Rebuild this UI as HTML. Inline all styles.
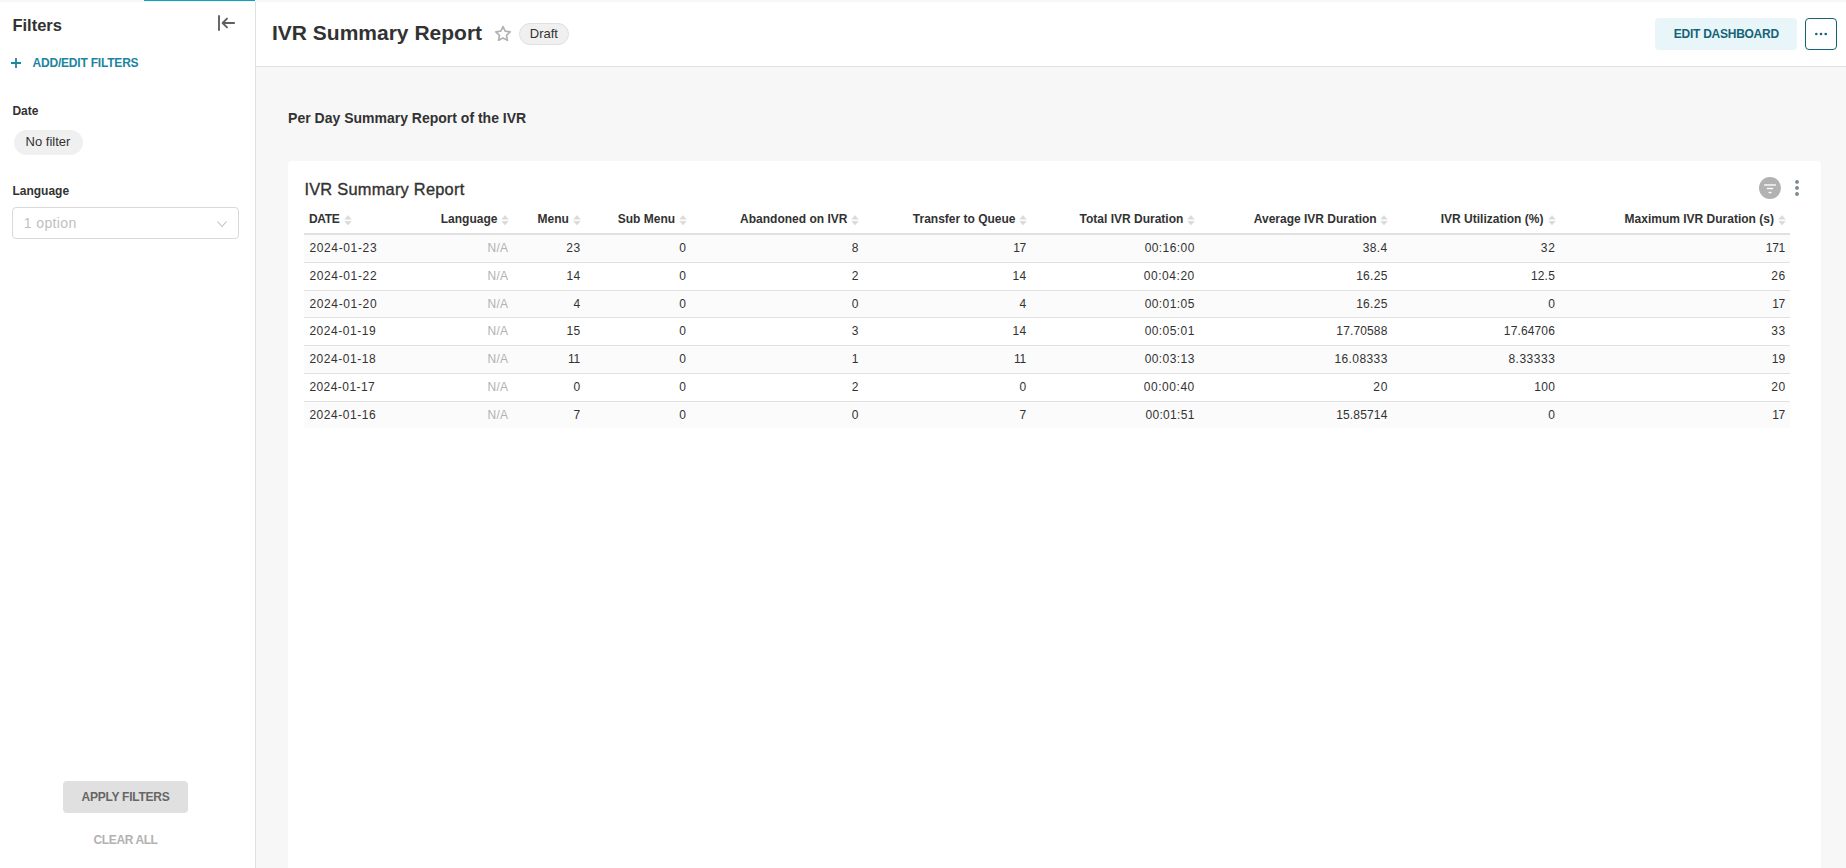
<!DOCTYPE html>
<html><head><meta charset="utf-8"><title>IVR Summary Report</title>
<style>
html,body{margin:0;padding:0;width:1846px;height:868px;overflow:hidden;background:#fff;font-family:"Liberation Sans", sans-serif}
.t{position:absolute;white-space:nowrap;line-height:normal;font-family:"Liberation Sans", sans-serif}
</style></head><body>
<div style="position:absolute;left:0;top:0;width:1846px;height:2px;background:#f7f7f7"></div><div style="position:absolute;left:144px;top:0;width:111px;height:1px;background:#0ea0c6"></div><div style="position:absolute;left:255px;top:2px;width:1px;height:866px;background:#e0e0e0"></div><div class="t" style="left:12.4px;top:16.07px;font-size:16.5px;font-weight:700;color:#323232;">Filters</div>
<svg style="position:absolute;left:214px;top:10px" width="26" height="26" viewBox="0 0 26 26"><path d="M5 5.2v15.6" stroke="#606060" stroke-width="1.9" fill="none"/><path d="M20.1 13H8.6M13 8.6L8.6 13l4.4 4.4" stroke="#606060" stroke-width="1.9" fill="none" stroke-linecap="round" stroke-linejoin="round"/></svg><svg style="position:absolute;left:10px;top:57px" width="12" height="12" viewBox="0 0 12 12"><path d="M6 1v10M1 6h10" stroke="#1a85a0" stroke-width="1.8"/></svg><div class="t" style="left:32.5px;top:56.14px;font-size:12px;font-weight:700;color:#1a85a0;letter-spacing:-0.2px;">ADD/EDIT FILTERS</div>
<div class="t" style="left:12.4px;top:104.24px;font-size:12px;font-weight:700;color:#323232;">Date</div>
<div style="position:absolute;left:14px;top:130px;width:69px;height:25px;border-radius:13px;background:#f0f0f0"></div><div class="t" style="left:25.6px;top:134.04px;font-size:13px;font-weight:400;color:#323232;">No filter</div>
<div class="t" style="left:12.4px;top:183.94px;font-size:12px;font-weight:700;color:#323232;">Language</div>
<div style="position:absolute;left:12px;top:207px;width:225px;height:30px;border:1px solid #d9d9d9;border-radius:4px;background:#fff"></div><div class="t" style="left:23.8px;top:215.03px;font-size:14px;font-weight:400;color:#bfbfbf;letter-spacing:0.38px;">1 option</div>
<svg style="position:absolute;left:216px;top:218px" width="12" height="12" viewBox="0 0 12 12"><path d="M1.5 3.5L6 8.5l4.5-5" stroke="#bfbfbf" stroke-width="1.1" fill="none"/></svg><div style="position:absolute;left:63px;top:781px;width:125px;height:32px;border-radius:4px;background:#e0e0e0"></div><div class="t" style="left:81.6px;top:790.24px;font-size:12px;font-weight:700;color:#666666;letter-spacing:-0.25px;">APPLY FILTERS</div>
<div class="t" style="left:93.6px;top:833.34px;font-size:12px;font-weight:700;color:#b2b2b2;letter-spacing:-0.4px;">CLEAR ALL</div>
<div style="position:absolute;left:256px;top:66px;width:1590px;height:1px;background:#e0e0e0"></div><div style="position:absolute;left:256px;top:67px;width:1590px;height:801px;background:#f7f7f7"></div><div class="t" style="left:272.0px;top:20.79px;font-size:21px;font-weight:700;color:#323232;">IVR Summary Report</div>
<svg style="position:absolute;left:494px;top:25px" width="18" height="17" viewBox="0 0 18 17"><path d="M9 1.6l2.2 4.6 5 .6-3.7 3.5.95 5L9 12.9l-4.45 2.4.95-5L1.8 6.8l5-.6z" stroke="#b2b2b2" stroke-width="1.7" fill="none" stroke-linejoin="round"/></svg><div style="position:absolute;left:519px;top:23px;width:48px;height:20px;border:1px solid #e0e0e0;border-radius:11px;background:#f0f0f0"></div><div class="t" style="left:529.8px;top:26.23px;font-size:13px;font-weight:400;color:#323232;">Draft</div>
<div style="position:absolute;left:1655px;top:18px;width:142px;height:32px;border-radius:4px;background:#e9f6f9"></div><div class="t" style="left:1673.8px;top:27.04px;font-size:12px;font-weight:700;color:#156378;letter-spacing:-0.26px;">EDIT DASHBOARD</div>
<div style="position:absolute;left:1805px;top:18px;width:30px;height:30px;border:1px solid #156378;border-radius:4px;background:#fff"></div><svg style="position:absolute;left:1812px;top:30px" width="18" height="8" viewBox="0 0 18 8"><circle cx="4.3" cy="4" r="1.3" fill="#156378"/><circle cx="9" cy="4" r="1.3" fill="#156378"/><circle cx="13.7" cy="4" r="1.3" fill="#156378"/></svg><div class="t" style="left:288.1px;top:109.93px;font-size:14px;font-weight:700;color:#323232;">Per Day Summary Report of the IVR</div>
<div style="position:absolute;left:288px;top:161px;width:1533px;height:720px;border-radius:4px;background:#fff"></div><div class="t" style="left:304.4px;top:180.16px;font-size:16.4px;font-weight:400;color:#323232;letter-spacing:0.24px;-webkit-text-stroke:0.35px #323232;">IVR Summary Report</div>
<svg style="position:absolute;left:1759px;top:177px" width="22" height="22" viewBox="0 0 22 22"><circle cx="11" cy="11" r="11" fill="#b2b2b2"/><path d="M5.1 8h11.8" stroke="#f0f0f0" stroke-width="1.7"/><path d="M7.9 11.5h6.2" stroke="#fff" stroke-width="1.4"/><path d="M10.2 15.4h1.6" stroke="#fff" stroke-width="1.5" stroke-linecap="round"/></svg><svg style="position:absolute;left:1793px;top:178px" width="8" height="20" viewBox="0 0 8 20"><circle cx="4" cy="3.9" r="1.95" fill="#7b8891"/><circle cx="4" cy="9.9" r="1.95" fill="#7b8891"/><circle cx="4" cy="16" r="1.95" fill="#7b8891"/></svg><div class="t" style="left:308.9px;top:212.24px;font-size:12px;font-weight:700;color:#323232;letter-spacing:-0.3px;">DATE</div>
<svg style="position:absolute;left:343.7px;top:214.5px" width="8" height="11" viewBox="0 0 8 11"><path d="M4 0.4L7.3 4.3H0.7z M4 10.1L7.3 6.3H0.7z" fill="#d9d9d9" stroke="#d9d9d9" stroke-width="0.4" stroke-linejoin="round"/></svg><div class="t" style="right:1348.6px;top:212.24px;font-size:12px;font-weight:700;color:#323232;">Language</div>
<svg style="position:absolute;left:500.8px;top:214.5px" width="8" height="11" viewBox="0 0 8 11"><path d="M4 0.4L7.3 4.3H0.7z M4 10.1L7.3 6.3H0.7z" fill="#d9d9d9" stroke="#d9d9d9" stroke-width="0.4" stroke-linejoin="round"/></svg><div class="t" style="right:1277.1px;top:212.24px;font-size:12px;font-weight:700;color:#323232;">Menu</div>
<svg style="position:absolute;left:572.8px;top:214.5px" width="8" height="11" viewBox="0 0 8 11"><path d="M4 0.4L7.3 4.3H0.7z M4 10.1L7.3 6.3H0.7z" fill="#d9d9d9" stroke="#d9d9d9" stroke-width="0.4" stroke-linejoin="round"/></svg><div class="t" style="right:1170.9px;top:212.24px;font-size:12px;font-weight:700;color:#323232;">Sub Menu</div>
<svg style="position:absolute;left:678.7px;top:214.5px" width="8" height="11" viewBox="0 0 8 11"><path d="M4 0.4L7.3 4.3H0.7z M4 10.1L7.3 6.3H0.7z" fill="#d9d9d9" stroke="#d9d9d9" stroke-width="0.4" stroke-linejoin="round"/></svg><div class="t" style="right:998.6px;top:212.24px;font-size:12px;font-weight:700;color:#323232;">Abandoned on IVR</div>
<svg style="position:absolute;left:851.2px;top:214.5px" width="8" height="11" viewBox="0 0 8 11"><path d="M4 0.4L7.3 4.3H0.7z M4 10.1L7.3 6.3H0.7z" fill="#d9d9d9" stroke="#d9d9d9" stroke-width="0.4" stroke-linejoin="round"/></svg><div class="t" style="right:830.5px;top:212.24px;font-size:12px;font-weight:700;color:#323232;">Transfer to Queue</div>
<svg style="position:absolute;left:1019.0px;top:214.5px" width="8" height="11" viewBox="0 0 8 11"><path d="M4 0.4L7.3 4.3H0.7z M4 10.1L7.3 6.3H0.7z" fill="#d9d9d9" stroke="#d9d9d9" stroke-width="0.4" stroke-linejoin="round"/></svg><div class="t" style="right:662.7px;top:212.24px;font-size:12px;font-weight:700;color:#323232;">Total IVR Duration</div>
<svg style="position:absolute;left:1186.9px;top:214.5px" width="8" height="11" viewBox="0 0 8 11"><path d="M4 0.4L7.3 4.3H0.7z M4 10.1L7.3 6.3H0.7z" fill="#d9d9d9" stroke="#d9d9d9" stroke-width="0.4" stroke-linejoin="round"/></svg><div class="t" style="right:469.29999999999995px;top:212.24px;font-size:12px;font-weight:700;color:#323232;">Average IVR Duration</div>
<svg style="position:absolute;left:1380.3px;top:214.5px" width="8" height="11" viewBox="0 0 8 11"><path d="M4 0.4L7.3 4.3H0.7z M4 10.1L7.3 6.3H0.7z" fill="#d9d9d9" stroke="#d9d9d9" stroke-width="0.4" stroke-linejoin="round"/></svg><div class="t" style="right:302.60000000000014px;top:212.24px;font-size:12px;font-weight:700;color:#323232;">IVR Utilization (%)</div>
<svg style="position:absolute;left:1547.9px;top:214.5px" width="8" height="11" viewBox="0 0 8 11"><path d="M4 0.4L7.3 4.3H0.7z M4 10.1L7.3 6.3H0.7z" fill="#d9d9d9" stroke="#d9d9d9" stroke-width="0.4" stroke-linejoin="round"/></svg><div class="t" style="right:72.10000000000014px;top:212.24px;font-size:12px;font-weight:700;color:#323232;">Maximum IVR Duration (s)</div>
<svg style="position:absolute;left:1778.3px;top:214.5px" width="8" height="11" viewBox="0 0 8 11"><path d="M4 0.4L7.3 4.3H0.7z M4 10.1L7.3 6.3H0.7z" fill="#d9d9d9" stroke="#d9d9d9" stroke-width="0.4" stroke-linejoin="round"/></svg><div style="position:absolute;left:304px;top:233px;width:1486px;height:2px;background:#e0e0e0"></div><div style="position:absolute;left:304px;top:235.00px;width:1486px;height:27.83px;background:#fbfbfb"></div><div style="position:absolute;left:304px;top:261.83px;width:1486px;height:1px;background:#e0e0e0"></div><div class="t" style="left:309.4px;top:240.94px;font-size:12px;font-weight:400;color:#323232;letter-spacing:0.642px;">2024-01-23</div>
<div class="t" style="right:1337.8px;top:240.94px;font-size:12px;font-weight:400;color:#b2b2b2;letter-spacing:0.2px;">N/A</div>
<div class="t" style="right:1265.2730000000001px;top:240.94px;font-size:12px;font-weight:400;color:#323232;letter-spacing:0.627px;">23</div>
<div class="t" style="right:1159.473px;top:240.94px;font-size:12px;font-weight:400;color:#323232;letter-spacing:0.627px;">0</div>
<div class="t" style="right:987.073px;top:240.94px;font-size:12px;font-weight:400;color:#323232;letter-spacing:0.627px;">8</div>
<div class="t" style="right:820.2730000000001px;top:240.94px;font-size:12px;font-weight:400;color:#323232;letter-spacing:-0.373px;">17</div>
<div class="t" style="right:651.2760000000001px;top:240.94px;font-size:12px;font-weight:400;color:#323232;letter-spacing:0.424px;">00:16:00</div>
<div class="t" style="right:458.288px;top:240.94px;font-size:12px;font-weight:400;color:#323232;letter-spacing:0.412px;">38.4</div>
<div class="t" style="right:290.5730000000001px;top:240.94px;font-size:12px;font-weight:400;color:#323232;letter-spacing:0.627px;">32</div>
<div class="t" style="right:61.1400000000001px;top:240.94px;font-size:12px;font-weight:400;color:#323232;letter-spacing:-0.34px;">171</div>
<div style="position:absolute;left:304px;top:289.66px;width:1486px;height:1px;background:#e0e0e0"></div><div class="t" style="left:309.4px;top:268.77px;font-size:12px;font-weight:400;color:#323232;letter-spacing:0.642px;">2024-01-22</div>
<div class="t" style="right:1337.8px;top:268.77px;font-size:12px;font-weight:400;color:#b2b2b2;letter-spacing:0.2px;">N/A</div>
<div class="t" style="right:1265.723px;top:268.77px;font-size:12px;font-weight:400;color:#323232;letter-spacing:0.177px;">14</div>
<div class="t" style="right:1159.473px;top:268.77px;font-size:12px;font-weight:400;color:#323232;letter-spacing:0.627px;">0</div>
<div class="t" style="right:987.073px;top:268.77px;font-size:12px;font-weight:400;color:#323232;letter-spacing:0.627px;">2</div>
<div class="t" style="right:819.7230000000002px;top:268.77px;font-size:12px;font-weight:400;color:#323232;letter-spacing:0.177px;">14</div>
<div class="t" style="right:651.163px;top:268.77px;font-size:12px;font-weight:400;color:#323232;letter-spacing:0.537px;">00:04:20</div>
<div class="t" style="right:458.4250000000002px;top:268.77px;font-size:12px;font-weight:400;color:#323232;letter-spacing:0.275px;">16.25</div>
<div class="t" style="right:291.01300000000015px;top:268.77px;font-size:12px;font-weight:400;color:#323232;letter-spacing:0.187px;">12.5</div>
<div class="t" style="right:60.173px;top:268.77px;font-size:12px;font-weight:400;color:#323232;letter-spacing:0.627px;">26</div>
<div style="position:absolute;left:304px;top:290.66px;width:1486px;height:27.83px;background:#fbfbfb"></div><div style="position:absolute;left:304px;top:317.49px;width:1486px;height:1px;background:#e0e0e0"></div><div class="t" style="left:309.4px;top:296.60px;font-size:12px;font-weight:400;color:#323232;letter-spacing:0.642px;">2024-01-20</div>
<div class="t" style="right:1337.8px;top:296.60px;font-size:12px;font-weight:400;color:#b2b2b2;letter-spacing:0.2px;">N/A</div>
<div class="t" style="right:1265.2730000000001px;top:296.60px;font-size:12px;font-weight:400;color:#323232;letter-spacing:0.627px;">4</div>
<div class="t" style="right:1159.473px;top:296.60px;font-size:12px;font-weight:400;color:#323232;letter-spacing:0.627px;">0</div>
<div class="t" style="right:987.073px;top:296.60px;font-size:12px;font-weight:400;color:#323232;letter-spacing:0.627px;">0</div>
<div class="t" style="right:819.2730000000001px;top:296.60px;font-size:12px;font-weight:400;color:#323232;letter-spacing:0.627px;">4</div>
<div class="t" style="right:651.2760000000001px;top:296.60px;font-size:12px;font-weight:400;color:#323232;letter-spacing:0.424px;">00:01:05</div>
<div class="t" style="right:458.4250000000002px;top:296.60px;font-size:12px;font-weight:400;color:#323232;letter-spacing:0.275px;">16.25</div>
<div class="t" style="right:290.5730000000001px;top:296.60px;font-size:12px;font-weight:400;color:#323232;letter-spacing:0.627px;">0</div>
<div class="t" style="right:61.173px;top:296.60px;font-size:12px;font-weight:400;color:#323232;letter-spacing:-0.373px;">17</div>
<div style="position:absolute;left:304px;top:345.32px;width:1486px;height:1px;background:#e0e0e0"></div><div class="t" style="left:309.4px;top:324.43px;font-size:12px;font-weight:400;color:#323232;letter-spacing:0.552px;">2024-01-19</div>
<div class="t" style="right:1337.8px;top:324.43px;font-size:12px;font-weight:400;color:#b2b2b2;letter-spacing:0.2px;">N/A</div>
<div class="t" style="right:1265.723px;top:324.43px;font-size:12px;font-weight:400;color:#323232;letter-spacing:0.177px;">15</div>
<div class="t" style="right:1159.473px;top:324.43px;font-size:12px;font-weight:400;color:#323232;letter-spacing:0.627px;">0</div>
<div class="t" style="right:987.073px;top:324.43px;font-size:12px;font-weight:400;color:#323232;letter-spacing:0.627px;">3</div>
<div class="t" style="right:819.7230000000002px;top:324.43px;font-size:12px;font-weight:400;color:#323232;letter-spacing:0.177px;">14</div>
<div class="t" style="right:651.2760000000001px;top:324.43px;font-size:12px;font-weight:400;color:#323232;letter-spacing:0.424px;">00:05:01</div>
<div class="t" style="right:458.568px;top:324.43px;font-size:12px;font-weight:400;color:#323232;letter-spacing:0.132px;">17.70588</div>
<div class="t" style="right:291.068px;top:324.43px;font-size:12px;font-weight:400;color:#323232;letter-spacing:0.132px;">17.64706</div>
<div class="t" style="right:60.173px;top:324.43px;font-size:12px;font-weight:400;color:#323232;letter-spacing:0.627px;">33</div>
<div style="position:absolute;left:304px;top:346.32px;width:1486px;height:27.83px;background:#fbfbfb"></div><div style="position:absolute;left:304px;top:373.15px;width:1486px;height:1px;background:#e0e0e0"></div><div class="t" style="left:309.4px;top:352.26px;font-size:12px;font-weight:400;color:#323232;letter-spacing:0.552px;">2024-01-18</div>
<div class="t" style="right:1337.8px;top:352.26px;font-size:12px;font-weight:400;color:#b2b2b2;letter-spacing:0.2px;">N/A</div>
<div class="t" style="right:1266.173px;top:352.26px;font-size:12px;font-weight:400;color:#323232;letter-spacing:-0.273px;">11</div>
<div class="t" style="right:1159.473px;top:352.26px;font-size:12px;font-weight:400;color:#323232;letter-spacing:0.627px;">0</div>
<div class="t" style="right:987.973px;top:352.26px;font-size:12px;font-weight:400;color:#323232;letter-spacing:-0.273px;">1</div>
<div class="t" style="right:820.1730000000002px;top:352.26px;font-size:12px;font-weight:400;color:#323232;letter-spacing:-0.273px;">11</div>
<div class="t" style="right:651.2760000000001px;top:352.26px;font-size:12px;font-weight:400;color:#323232;letter-spacing:0.424px;">00:03:13</div>
<div class="t" style="right:458.2930000000001px;top:352.26px;font-size:12px;font-weight:400;color:#323232;letter-spacing:0.407px;">16.08333</div>
<div class="t" style="right:290.69600000000014px;top:352.26px;font-size:12px;font-weight:400;color:#323232;letter-spacing:0.504px;">8.33333</div>
<div class="t" style="right:60.62300000000005px;top:352.26px;font-size:12px;font-weight:400;color:#323232;letter-spacing:0.177px;">19</div>
<div style="position:absolute;left:304px;top:400.98px;width:1486px;height:1px;background:#e0e0e0"></div><div class="t" style="left:309.4px;top:380.09px;font-size:12px;font-weight:400;color:#323232;letter-spacing:0.442px;">2024-01-17</div>
<div class="t" style="right:1337.8px;top:380.09px;font-size:12px;font-weight:400;color:#b2b2b2;letter-spacing:0.2px;">N/A</div>
<div class="t" style="right:1265.2730000000001px;top:380.09px;font-size:12px;font-weight:400;color:#323232;letter-spacing:0.627px;">0</div>
<div class="t" style="right:1159.473px;top:380.09px;font-size:12px;font-weight:400;color:#323232;letter-spacing:0.627px;">0</div>
<div class="t" style="right:987.073px;top:380.09px;font-size:12px;font-weight:400;color:#323232;letter-spacing:0.627px;">2</div>
<div class="t" style="right:819.2730000000001px;top:380.09px;font-size:12px;font-weight:400;color:#323232;letter-spacing:0.627px;">0</div>
<div class="t" style="right:651.163px;top:380.09px;font-size:12px;font-weight:400;color:#323232;letter-spacing:0.537px;">00:00:40</div>
<div class="t" style="right:458.0730000000001px;top:380.09px;font-size:12px;font-weight:400;color:#323232;letter-spacing:0.627px;">20</div>
<div class="t" style="right:290.87300000000005px;top:380.09px;font-size:12px;font-weight:400;color:#323232;letter-spacing:0.327px;">100</div>
<div class="t" style="right:60.173px;top:380.09px;font-size:12px;font-weight:400;color:#323232;letter-spacing:0.627px;">20</div>
<div style="position:absolute;left:304px;top:401.98px;width:1486px;height:25.85px;background:#fbfbfb"></div><div class="t" style="left:309.4px;top:407.92px;font-size:12px;font-weight:400;color:#323232;letter-spacing:0.552px;">2024-01-16</div>
<div class="t" style="right:1337.8px;top:407.92px;font-size:12px;font-weight:400;color:#b2b2b2;letter-spacing:0.2px;">N/A</div>
<div class="t" style="right:1266.373px;top:407.92px;font-size:12px;font-weight:400;color:#323232;letter-spacing:-0.473px;">7</div>
<div class="t" style="right:1159.473px;top:407.92px;font-size:12px;font-weight:400;color:#323232;letter-spacing:0.627px;">0</div>
<div class="t" style="right:987.073px;top:407.92px;font-size:12px;font-weight:400;color:#323232;letter-spacing:0.627px;">0</div>
<div class="t" style="right:820.373px;top:407.92px;font-size:12px;font-weight:400;color:#323232;letter-spacing:-0.473px;">7</div>
<div class="t" style="right:651.3880000000001px;top:407.92px;font-size:12px;font-weight:400;color:#323232;letter-spacing:0.312px;">00:01:51</div>
<div class="t" style="right:458.5430000000001px;top:407.92px;font-size:12px;font-weight:400;color:#323232;letter-spacing:0.157px;">15.85714</div>
<div class="t" style="right:290.5730000000001px;top:407.92px;font-size:12px;font-weight:400;color:#323232;letter-spacing:0.627px;">0</div>
<div class="t" style="right:61.173px;top:407.92px;font-size:12px;font-weight:400;color:#323232;letter-spacing:-0.373px;">17</div>

</body></html>
